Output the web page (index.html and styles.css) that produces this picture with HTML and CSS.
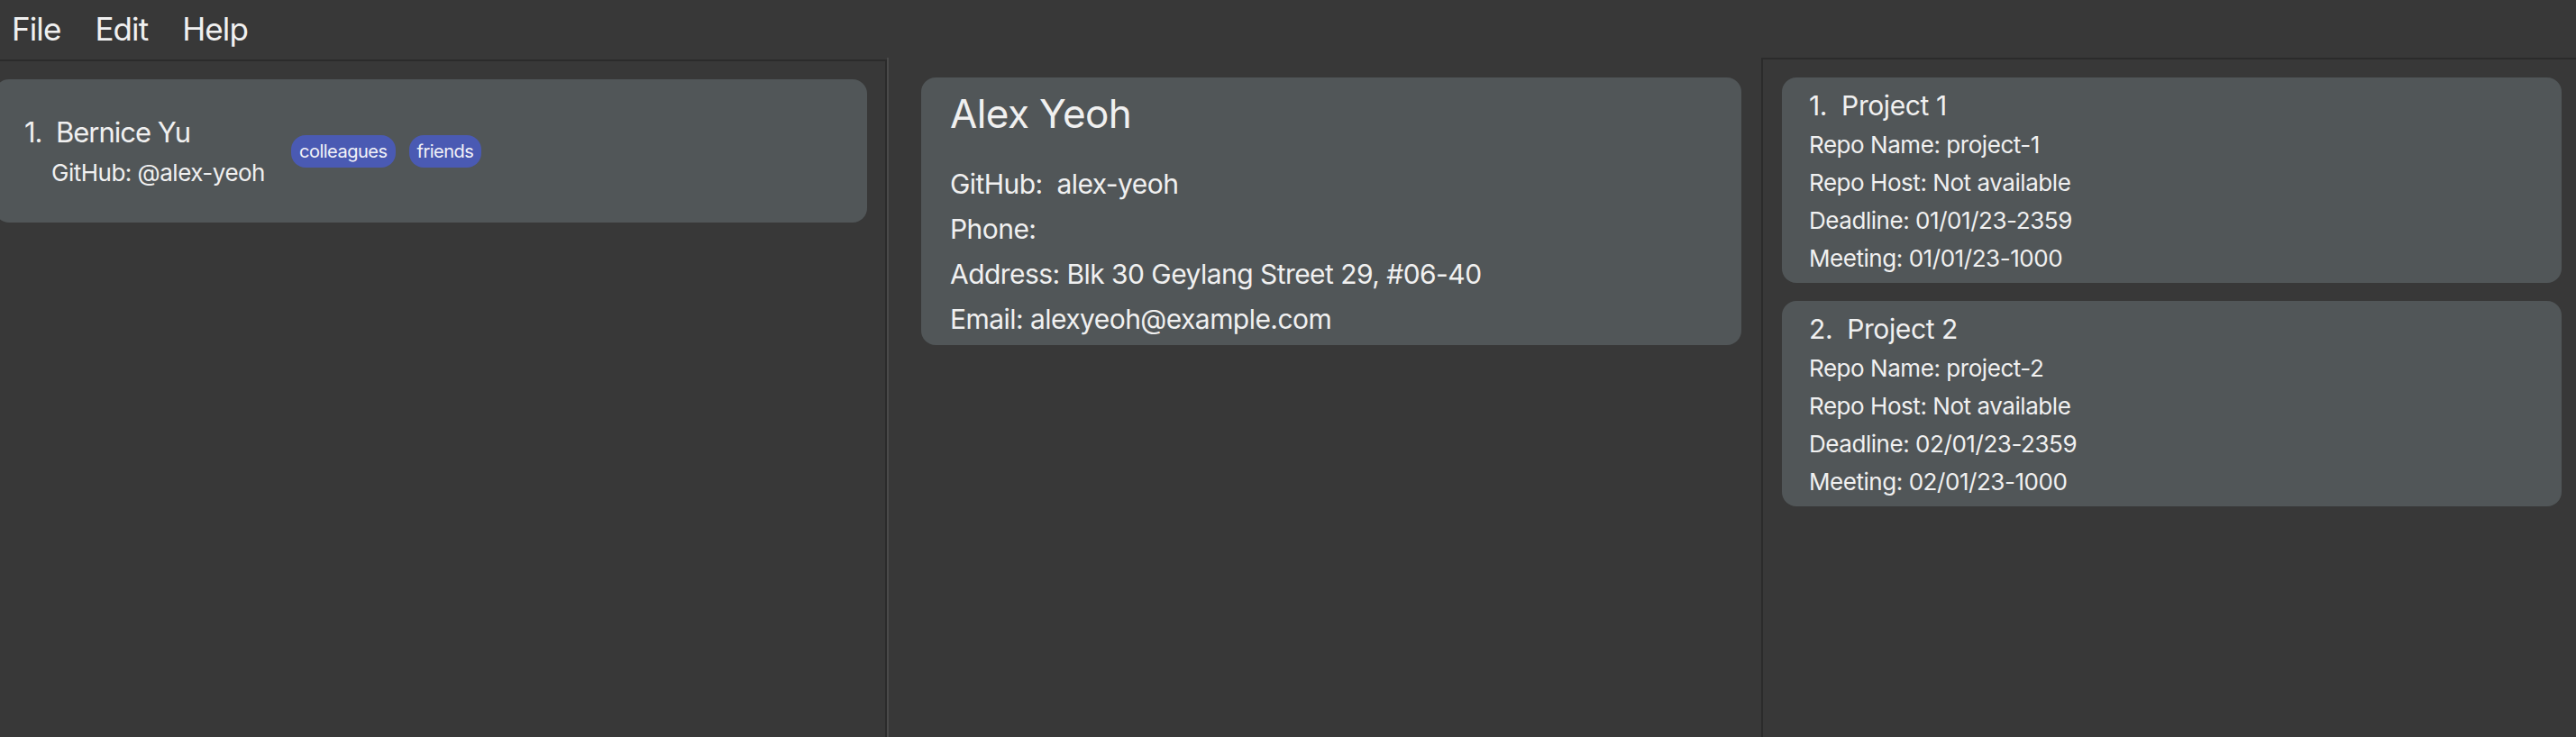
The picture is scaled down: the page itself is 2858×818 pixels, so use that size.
FILE: index.html
```html
<!DOCTYPE html>
<html lang="en">
<head>
<meta charset="utf-8">
<title>Project Book</title>
<link rel="stylesheet" href="styles.css">
</head>
<body>
<div class="app">
  <nav class="menubar">
    <span class="menu-item">File</span>
    <span class="menu-item">Edit</span>
    <span class="menu-item">Help</span>
  </nav>
  <main class="panes">
    <section class="pane pane-left">
      <div class="card person-card">
        <div class="person-text">
          <div class="person-name">1.&nbsp;&nbsp;Bernice Yu</div>
          <div class="person-github">GitHub: @alex-yeoh</div>
        </div>
        <div class="tags">
          <span class="tag">colleagues</span>
          <span class="tag">friends</span>
        </div>
      </div>
    </section>
    <div class="divider"></div>
    <section class="pane pane-center">
      <div class="card detail-card">
        <div class="detail-name">Alex Yeoh</div>
        <div class="detail-rows">
          <div class="detail-row">GitHub:&nbsp;&nbsp;alex-yeoh</div>
          <div class="detail-row">Phone:</div>
          <div class="detail-row">Address: Blk 30 Geylang Street 29, #06-40</div>
          <div class="detail-row">Email: alexyeoh@example.com</div>
        </div>
      </div>
    </section>
    <section class="pane pane-right">
      <div class="card project-card">
        <div class="project-title">1.&nbsp;&nbsp;Project 1</div>
        <div class="project-row">Repo Name: project-1</div>
        <div class="project-row">Repo Host: Not available</div>
        <div class="project-row">Deadline: 01/01/23-2359</div>
        <div class="project-row">Meeting: 01/01/23-1000</div>
      </div>
      <div class="card project-card">
        <div class="project-title">2.&nbsp;&nbsp;Project 2</div>
        <div class="project-row">Repo Name: project-2</div>
        <div class="project-row">Repo Host: Not available</div>
        <div class="project-row">Deadline: 02/01/23-2359</div>
        <div class="project-row">Meeting: 02/01/23-1000</div>
      </div>
    </section>
  </main>
</div>
</body>
</html>
```

FILE: styles.css
```css
html, body {
  margin: 0;
  padding: 0;
  height: 100%;
}

body {
  background: #383838;
  color: #f0f0f0;
  font-family: "Inter", "Liberation Sans", sans-serif;
  overflow: hidden;
}

.app {
  display: flex;
  flex-direction: column;
  height: 818px;
}

.menubar {
  height: 64px;
  display: flex;
  align-items: center;
  padding-left: 13px;
  gap: 38px;
  flex: none;
}

.menu-item {
  font-size: 35px;
  line-height: 44px;
  letter-spacing: -0.9px;
}

.panes {
  flex: 1;
  display: grid;
  grid-template-columns: 984px 2px 968px 1fr;
  min-height: 0;
}

.pane {
  min-width: 0;
  overflow: hidden;
}

.pane-left {
  margin-top: 2px;
  border-top: 2px solid #2b2b2b;
  border-right: 2px solid #2b2b2b;
  padding: 20px 20px 0 0;
}

.divider {
  background: #4a4a4a;
}

.pane-center {
  padding: 22px 22px 0 36px;
}

.pane-right {
  border-top: 2px solid #2b2b2b;
  border-left: 2px solid #2b2b2b;
  padding: 20px 16px 0 21px;
  display: flex;
  flex-direction: column;
  gap: 20px;
}

.card {
  background: #515658;
  border-radius: 16px;
}

/* left list card */
.person-card {
  margin-left: -6px;
  height: 159px;
  display: flex;
  align-items: center;
  padding-left: 33px;
  box-sizing: border-box;
  gap: 29px;
}

.person-name {
  font-size: 31px;
  line-height: 44px;
  letter-spacing: -1px;
}

.person-github {
  font-size: 26px;
  line-height: 38px;
  margin-top: 4px;
  padding-left: 30px;
  letter-spacing: -0.5px;
}

.tags {
  display: flex;
  gap: 15px;
}

.tag {
  background: #4a5ab3;
  color: #f2f2f8;
  font-size: 20px;
  line-height: 36px;
  height: 36px;
  padding: 0 9px;
  border-radius: 16px;
  letter-spacing: -0.5px;
}

/* center detail card */
.detail-card {
  padding: 10px 32px 4px 32px;
}

.detail-name {
  font-size: 44px;
  line-height: 60px;
  letter-spacing: -0.6px;
}

.detail-rows {
  margin-top: 23px;
}

.detail-row {
  font-size: 30px;
  line-height: 50px;
  letter-spacing: -0.55px;
}

/* right project cards */
.project-card {
  padding: 10px 30px 6px 30px;
}

.project-title {
  font-size: 30px;
  line-height: 42px;
  margin-bottom: 2px;
  letter-spacing: -0.4px;
}

.project-row {
  font-size: 26px;
  line-height: 42px;
  letter-spacing: -0.45px;
}
```
